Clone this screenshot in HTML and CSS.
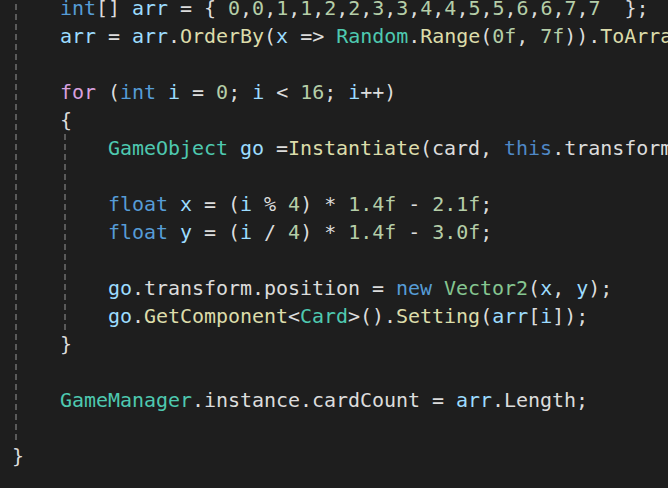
FILE: index.html
```html
<!DOCTYPE html>
<html>
<head>
<meta charset="utf-8">
<link rel="stylesheet" href="styles.css">
</head>
<body>
<div class="editor">
<div class="code">
<div class="block outer">
<div class="ln">    <span class="kw">int</span>[] <span class="lv">arr</span> = { <span class="num">0</span>,<span class="num">0</span>,<span class="num">1</span>,<span class="num">1</span>,<span class="num">2</span>,<span class="num">2</span>,<span class="num">3</span>,<span class="num">3</span>,<span class="num">4</span>,<span class="num">4</span>,<span class="num">5</span>,<span class="num">5</span>,<span class="num">6</span>,<span class="num">6</span>,<span class="num">7</span>,<span class="num">7</span>  };</div>
<div class="ln">    <span class="lv">arr</span> = <span class="lv">arr</span>.<span class="fn">OrderBy</span>(<span class="lv">x</span> =&gt; <span class="ty">Random</span>.<span class="fn">Range</span>(<span class="num">0f</span>, <span class="num">7f</span>)).<span class="fn">ToArray</span>();</div>
<div class="ln"> </div>
<div class="ln">    <span class="ctl">for</span> (<span class="kw">int</span> <span class="lv">i</span> = <span class="num">0</span>; <span class="lv">i</span> &lt; <span class="num">16</span>; <span class="lv">i</span>++)</div>
<div class="ln">    {</div>
<div class="block inner">
<div class="ln">        <span class="ty">GameObject</span> <span class="lv">go</span> =<span class="fn">Instantiate</span>(card, <span class="th">this</span>.transform);</div>
<div class="ln"> </div>
<div class="ln">        <span class="kw">float</span> <span class="lv">x</span> = (<span class="lv">i</span> % <span class="num">4</span>) * <span class="num">1.4f</span> - <span class="num">2.1f</span>;</div>
<div class="ln">        <span class="kw">float</span> <span class="lv">y</span> = (<span class="lv">i</span> / <span class="num">4</span>) * <span class="num">1.4f</span> - <span class="num">3.0f</span>;</div>
<div class="ln"> </div>
<div class="ln">        <span class="lv">go</span>.transform.position = <span class="kw">new</span> <span class="st">Vector2</span>(<span class="lv">x</span>, <span class="lv">y</span>);</div>
<div class="ln">        <span class="lv">go</span>.<span class="fn">GetComponent</span>&lt;<span class="ty">Card</span>&gt;().<span class="fn">Setting</span>(<span class="lv">arr</span>[<span class="lv">i</span>]);</div>
</div>
<div class="ln">    }</div>
<div class="ln"> </div>
<div class="ln">    <span class="ty">GameManager</span>.instance.cardCount = <span class="lv">arr</span>.Length;</div>
<div class="ln"> </div>
</div>
<div class="ln">}</div>
</div>
</div>
</body>
</html>
```
FILE: styles.css
```css
html, body {
  margin: 0;
  padding: 0;
  background: #1e1e1e;
}

.editor {
  width: 668px;
  height: 488px;
  overflow: hidden;
  background: #1e1e1e;
}

.code {
  margin-top: -6px;
  padding-left: 12px;
  font-family: "DejaVu Sans Mono", monospace;
  font-size: 20px;
  letter-spacing: -0.04px;
  line-height: 28px;
  color: #dcdcdc;
}

.ln {
  white-space: pre;
  height: 28px;
}

.block {
  background-image: linear-gradient(to bottom, #5a5a5a 6px, transparent 6px);
  background-size: 2px 10px;
  background-repeat: repeat-y;
}

.outer {
  background-position: 3px 0;
}

.inner {
  background-position: 52px 0;
}

.kw { color: #569cd6; }
.th { color: #4f88c6; }
.ctl { color: #d8a0df; }
.lv { color: #9cdcfe; }
.ty { color: #4ec9b0; }
.st { color: #86c691; }
.fn { color: #dcdcaa; }
.num { color: #b5cea8; }
```
